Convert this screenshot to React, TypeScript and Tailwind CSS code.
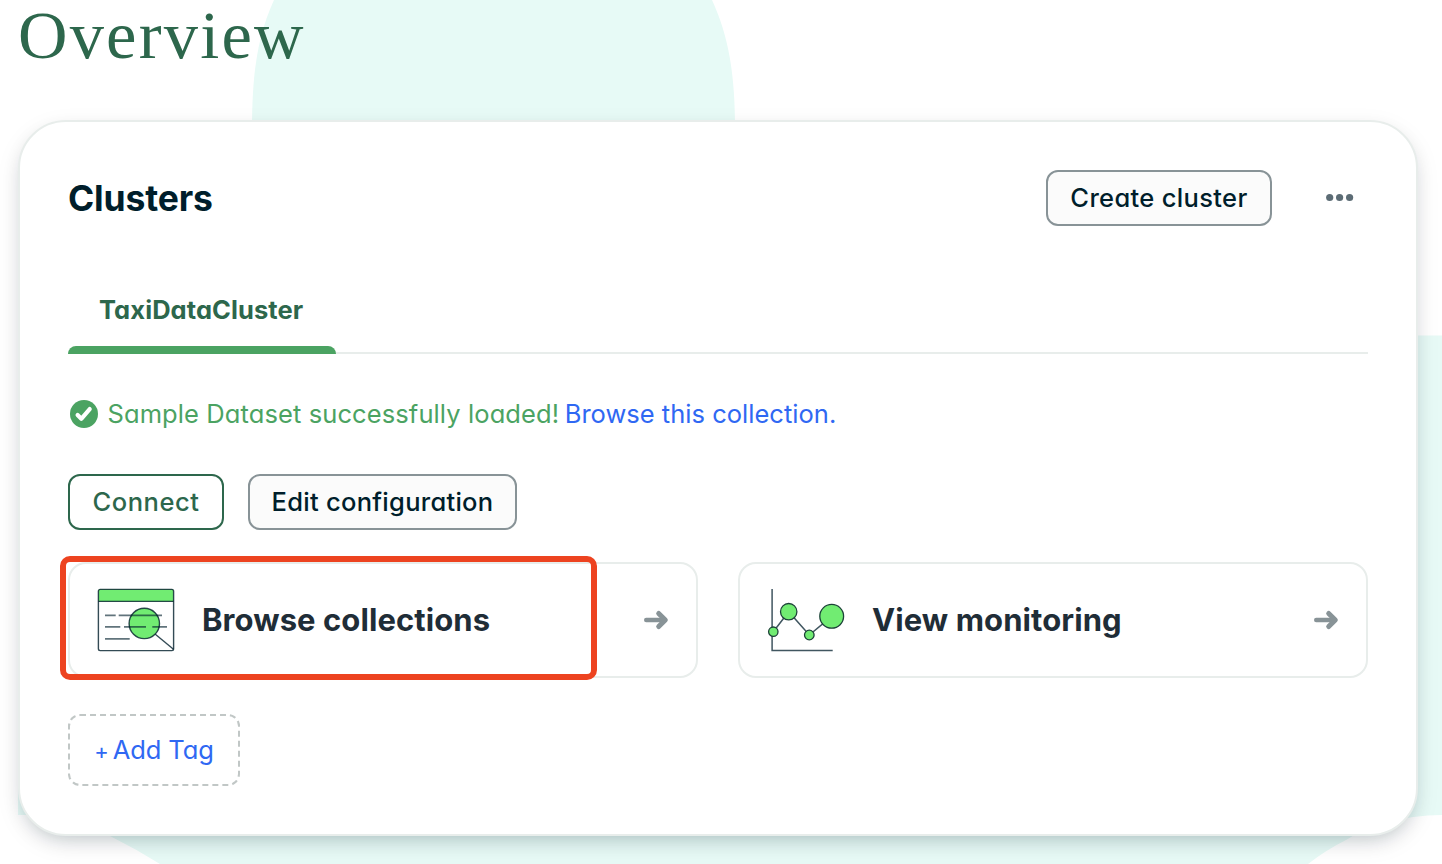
import type { ReactNode } from "react";

function BackgroundArt() {
  return (
    <svg className="absolute inset-0 h-full w-full" viewBox="0 0 1442 864" preserveAspectRatio="none" aria-hidden="true">
      <g fill="#e7faf6">
        <path d="M252 130C252 75 257 37 274 0H712C729 37 735 75 735 130Z" />
        <path d="M18 335.5H1442V815Q1382 816 1346 840Q1326 850 1308 864H160Q136 849 110 836Q70 816 40 815H18Z" />
      </g>
    </svg>
  );
}

function CheckIcon() {
  return (
    <svg className="size-8 shrink-0" viewBox="0 0 32 32" aria-hidden="true">
      <circle cx="16" cy="16" r="14" fill="#4ba362" />
      <path d="M9.6 17L13.3 20.8L21.7 11.1" fill="none" stroke="#fff" strokeWidth="4.2" strokeLinecap="round" strokeLinejoin="round" />
    </svg>
  );
}

function ArrowIcon() {
  return (
    <svg className="h-8 w-8 shrink-0" viewBox="0 0 32 32" aria-hidden="true">
      <g fill="none" stroke="#889397" strokeLinecap="round">
        <path d="M6.2 16H24" strokeWidth="4.4" />
        <path d="M18.7 9.4L25.3 16L18.7 22.6" strokeWidth="5" strokeLinejoin="round" />
      </g>
    </svg>
  );
}

function BrowseIcon() {
  return (
    <svg className="h-16 w-20 shrink-0" viewBox="0 0 80 64" fill="none" aria-hidden="true">
      <path d="M2.5 13.4V2.6Q2.5 1.3 3.8 1.3H76.2Q77.5 1.3 77.5 2.6V13.4Z" fill="#71ec72" />
      <circle cx="48.3" cy="35.4" r="15.2" fill="#71ec72" />
      <g stroke="#001e2b" strokeOpacity="0.8" strokeWidth="1.4">
        <rect x="2.4" y="1.4" width="75.2" height="61.2" rx="1.8" />
        <path d="M2.5 13.4H77.5" />
        <circle cx="48.3" cy="35.4" r="15.2" />
        <path d="M59.3 46.3L77.5 61.2" />
      </g>
      <g stroke="#001e2b" strokeOpacity="0.62" strokeWidth="1.7">
        <path d="M9 27.4H19.7M22.7 27.4H66M9 38.9H24.3M28 38.9H50M56.3 38.9H71M9 50.8H33.7" />
      </g>
    </svg>
  );
}

function MonitoringIcon() {
  return (
    <svg className="h-16 w-20 shrink-0" viewBox="0 0 80 64" fill="none" aria-hidden="true">
      <g stroke="#001e2b" strokeOpacity="0.75" strokeWidth="1.5">
        <path d="M6.1 1V62.4H66.7" />
        <path d="M7.3 43.7L22.7 23.7L43.3 47L65.7 28.3" />
      </g>
      <g fill="#71ec72" stroke="#1c4238" strokeWidth="1.3">
        <circle cx="7.3" cy="43.7" r="4.7" />
        <circle cx="22.7" cy="23.7" r="8.2" />
        <circle cx="43.3" cy="47" r="4.8" />
        <circle cx="65.7" cy="28.3" r="11.9" />
      </g>
    </svg>
  );
}

function ActionCard({ icon, children }: { icon: ReactNode; children: ReactNode }) {
  return (
    <a className="flex h-[116px] flex-1 items-center rounded-[18px] border-2 border-[#e8edeb] pr-6 pl-[26px]">
      {icon}
      <span className="ml-[26px] flex-1 text-[31px] leading-10 font-bold tracking-[0.08px] whitespace-nowrap text-[#1f2d37]">
        {children}
      </span>
      <ArrowIcon />
    </a>
  );
}

export default function App() {
  return (
    <div className="relative h-[864px] w-[1442px] overflow-hidden bg-white font-['Inter',sans-serif] text-[25.5px] leading-8 text-[#001e2b] [font-feature-settings:'cv11']">
      <BackgroundArt />
      <main className="relative pr-6 pl-[18px]">
        <h1 className="h-[120px] font-['Liberation_Serif',serif] text-[68.5px] leading-[70px] tracking-[2.2px] text-[#2d674c]">
          Overview
        </h1>

        <section className="h-[716px] rounded-[48px] border-2 border-[#e8edeb] bg-white p-12 shadow-[0_8px_20px_-8px_rgba(0,30,43,0.26),0_8px_26px_rgba(0,30,43,0.07)]">
          <header className="flex h-14 items-center">
            <h2 className="flex-1 pt-0.5 text-[35.5px] leading-10 font-bold tracking-[-0.15px]">Clusters</h2>
            <button className="flex h-14 w-[226px] items-center justify-center rounded-xl border-2 border-[#889397] bg-[#fbfbfb] font-medium tracking-[0.34px] whitespace-nowrap">
              Create cluster
            </button>
            <button className="mr-3 ml-[52px] h-8 w-8" aria-label="More options">
              <svg className="h-8 w-8" viewBox="0 0 32 32" fill="#5c6c75">
                <circle cx="5.7" cy="15.5" r="3.6" />
                <circle cx="15.6" cy="15.5" r="3.6" />
                <circle cx="25.6" cy="15.5" r="3.6" />
              </svg>
            </button>
          </header>

          <nav className="mt-[60px] flex h-[68px] border-b-2 border-[#e8edeb]">
            <div className="-mb-0.5 flex w-[268px] flex-col justify-between">
              <span className="mt-2 pl-[31px] leading-8 font-bold tracking-[0.08px] whitespace-nowrap text-[#2d674c]">TaxiDataCluster</span>
              <span className="h-2 rounded-t-lg bg-[#4ba362]" />
            </div>
          </nav>

          <div className="mt-11 flex h-8 items-center whitespace-nowrap">
            <CheckIcon />
            <p className="ml-[7.5px] tracking-[0.1px] text-[#4ba362]">Sample Dataset successfully loaded!</p>
            <a className="ml-[5.5px] tracking-[0.02px] text-[#2f68f3]">Browse this collection.</a>
          </div>

          <div className="mt-11 flex h-14 gap-6 font-medium whitespace-nowrap">
            <button className="flex w-[156px] items-center justify-center rounded-xl border-2 border-[#2d674c] bg-white tracking-[0.58px] text-[#2d674c]">
              Connect
            </button>
            <button className="flex w-[269px] items-center justify-center rounded-xl border-2 border-[#889397] bg-[#fbfbfb] tracking-[0.28px]">
              Edit configuration
            </button>
          </div>

          <div className="relative mt-8 flex gap-10">
            <ActionCard icon={<BrowseIcon />}>Browse collections</ActionCard>
            <ActionCard icon={<MonitoringIcon />}>View monitoring</ActionCard>
            <div className="absolute -top-[6.5px] -left-2 h-[124px] w-[537px] rounded-[10px] border-[6px] border-[#ed4320]" />
          </div>

          <button className="mt-9 flex h-[72px] w-[172px] items-center justify-center rounded-xl border-2 border-dashed border-[#c1c7c6] whitespace-nowrap text-[#2f68f3]">
            <span className="pt-px text-[22px]">+</span>
            <span className="ml-1 tracking-[-0.1px]">Add Tag</span>
          </button>
        </section>
      </main>
    </div>
  );
}
